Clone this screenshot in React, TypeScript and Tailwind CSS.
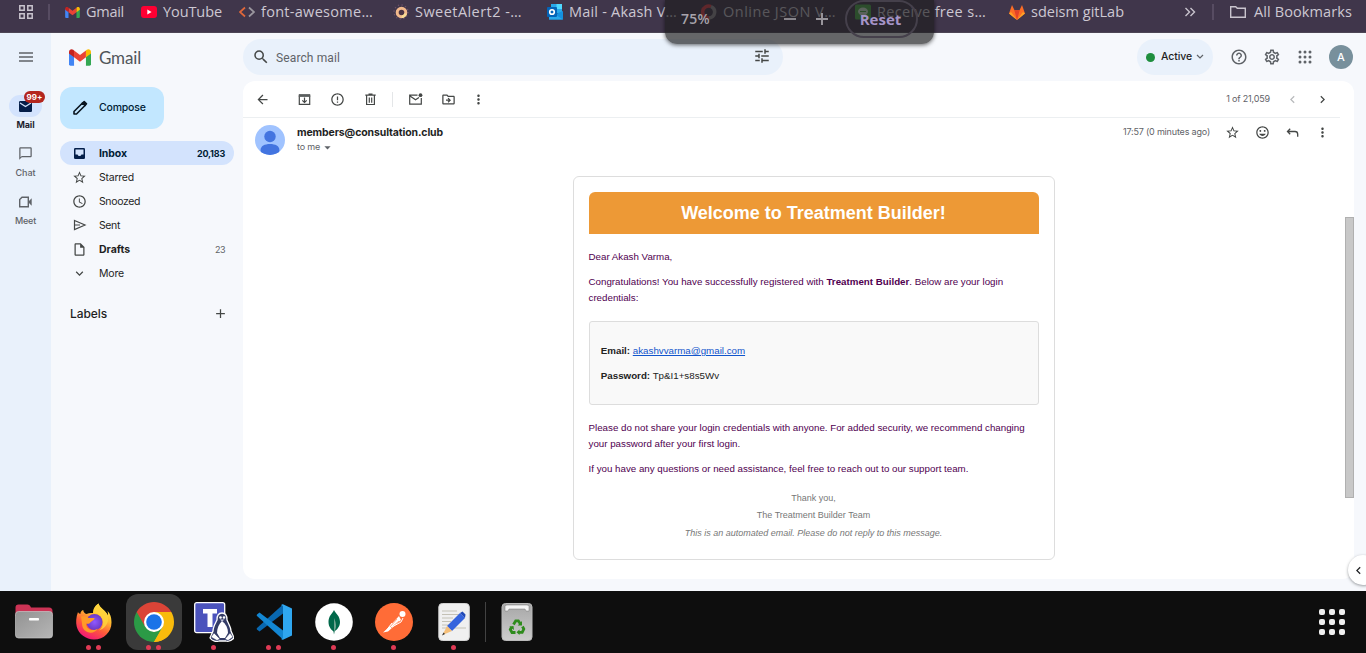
import React from "react";
import {
  MdStarOutline, MdSchedule, MdExpandMore, MdArrowBack, MdErrorOutline, MdMoreVert, MdChevronLeft, MdChevronRight,
  MdTune, MdHelpOutline, MdOutlineSettings, MdAdd, MdSearch, MdArrowDropDown, MdOutlineInsertDriveFile,
  MdOutlineDriveFileMove, MdChatBubbleOutline, MdOutlineMood,
} from "react-icons/md";

function T({ c = "", children }: { c?: string; children: React.ReactNode }) {
  return <span className={"whitespace-nowrap " + c}>{children}</span>;
}

function GmailLogo({ className }: { className: string }) {
  return (
    <svg viewBox="0 0 24 18" className={className}>
      <path d="M0 3v13.4A1.6 1.6 0 0 0 1.6 18H5.5V7z" fill="#4285f4" />
      <path d="M24 3v13.4a1.6 1.6 0 0 1-1.6 1.6H18.500V7z" fill="#34a853" />
      <path d="M5.500 1.300 12 6.200l6.500-4.900V8.700L12 13.500 5.500 8.700z" fill="#ea4335" />
      <path d="M18.500 1.300l.9-.7C21.300-.8 24 .5 24 2.800V4.600l-5.500 4.100z" fill="#fbbc04" />
      <path d="M5.500 1.300l-.9-.7C2.700-.8 0 .5 0 2.800V4.600l5.500 4.100z" fill="#c5221f" />
    </svg>
  );
}

const BM = "font-['Open_Sans',sans-serif] text-[14.5px] leading-6 text-[#cdc8d2] ";

function Bookmark({ icon, track, box, children }: { icon: React.ReactNode; track: string; box: string; children: string }) {
  return (
    <div className={"flex h-6 shrink-0 items-center gap-1.5 " + box}>
      {icon}
      <T c={BM + track}>{children}</T>
    </div>
  );
}

function BookmarkBar() {
  return (
    <div className="flex h-[33px] items-start border-b border-[#4d4655] bg-[#40364b]">
      <div className="flex h-6 w-[65px] shrink-0 items-center">
        <svg viewBox="0 0 14 14" className="ml-[19px] size-3.5" fill="none" stroke="#c9c4ce" strokeWidth="1.500">
          <path d="M.8.8h4.400v4.400H.8zM8.800.8h4.400v4.400H8.800zM.8 8.800h4.400v4.400H.8zM8.800 8.800h4.400v4.400H8.800z" />
        </svg>
        <div className="ml-[15px] h-4 w-[2px] bg-[#574c62]" />
      </div>
      <Bookmark icon={<GmailLogo className="w-[15px] h-[11px] shrink-0" />} track="tracking-[-0.27px]" box="w-[76px]">Gmail</Bookmark>
      <Bookmark track="tracking-[-0.09px]" box="w-[98px]" icon={
        <svg viewBox="0 0 16 12" className="w-4 h-3 shrink-0"><rect width="16" height="12" rx="3" fill="#ff0033" /><path d="M6.300 3.500v5l4.300-2.500z" fill="#fff" /></svg>
      }>YouTube</Bookmark>
      <Bookmark track="tracking-[0.29px]" box="w-[154px]" icon={
        <svg viewBox="0 0 16 12" className="w-4 h-3 shrink-0" fill="none" strokeWidth="1.700"><path d="M6 1.500 1 6l5 4.500" stroke="#e0673a" /><path d="M10 1.500 15 6l-5 4.500" stroke="#9a969e" /></svg>
      }>font-awesome…</Bookmark>
      <Bookmark track="tracking-[0.45px]" box="w-[154px]" icon={
        <svg viewBox="0 0 16 16" className="size-4 shrink-0"><circle cx="8" cy="8" r="7" fill="none" stroke="#6b5169" strokeWidth="1.300" strokeDasharray="1.300 2.400" /><circle cx="8.500" cy="8.500" r="4.300" fill="#4b3443" stroke="#f2b98c" strokeWidth="3" /><path d="M12.600 9.500a4.300 4.300 0 0 1-4 3.300" fill="none" stroke="#f8dc94" strokeWidth="2.500" /></svg>
      }>SweetAlert2 -…</Bookmark>
      <Bookmark track="tracking-[0.2px]" box="w-[154px]" icon={
        <svg viewBox="0 0 16 16" className="size-4 shrink-0"><path d="M4 0h11v9H4z" fill="#28a8ea" /><path d="M9.500 0H15v5H9.500z" fill="#50d9ff" /><path d="M2 12h4l5-3 5-2v8.500H2z" fill="#1490df" /><path d="M9 11l7 4.500H2V12z" fill="#28a8ea" /><rect y="3" width="10" height="10" rx="1" fill="#0364b8" /><circle cx="5" cy="8" r="2.300" fill="none" stroke="#fff" strokeWidth="1.600" /></svg>
      }>Mail - Akash V…</Bookmark>
      <Bookmark track="tracking-[0.5px]" box="w-[154px]" icon={
        <svg viewBox="0 0 16 16" className="size-4 shrink-0" fill="none" strokeWidth="3.500"><path d="M8 14a6 6 0 1 1 2-11.500" stroke="#e33b44" /><path d="M10 2.500A6 6 0 0 1 8 14" stroke="#918c91" /></svg>
      }>Online JSON V…</Bookmark>
      <Bookmark track="tracking-[0.33px]" box="w-[154px]" icon={
        <svg viewBox="0 0 16 16" className="size-4 shrink-0"><rect width="16" height="15" y=".5" rx="1.500" fill="#4aac48" /><ellipse cx="8" cy="7.500" rx="5" ry="4" fill="#d4ead3" /><path d="M5 7.500h6" stroke="#4aac48" /></svg>
      }>Receive free s…</Bookmark>
      <Bookmark track="tracking-[0.01px]" box="w-[175px]" icon={
        <svg viewBox="0 0 16 15" className="w-4 h-[15px] shrink-0"><path d="M8 15 0 8.500 3 0l2.500 5.300h5L13 0l3 8.500z" fill="#fc6d26" /><path d="M8 15 5.300 5.300h5.400z" fill="#e24329" /><path d="M0 8.500 2 7l6 8zM16 8.500 14 7l-6 8z" fill="#fca326" /></svg>
      }>sdeism gitLab</Bookmark>
      <div className="flex h-6 w-[46px] shrink-0 items-center">
        <svg viewBox="0 0 12 10" className="w-3 h-2.5" fill="none" stroke="#c9c4ce" strokeWidth="1.400"><path d="M1.500 1l4 4-4 4M6.500 1l4 4-4 4" /></svg>
        <div className="ml-4 h-4 w-[2px] bg-[#574c62]" />
      </div>
      <div className="flex h-6 items-center gap-2">
        <svg viewBox="0 0 16 12" className="w-4 h-3 shrink-0" fill="none" stroke="#c9c4ce" strokeWidth="1.400"><path d="M.7 11.300V.7h5l1.600 1.600h8v9z" /></svg>
        <T c={BM + "tracking-[0.11px]"}>All Bookmarks</T>
      </div>
    </div>
  );
}

function ZoomBubble() {
  return (
    <div className="absolute left-[665px] top-0 z-10 flex h-11 w-[269px] items-start rounded-b-xl bg-[#1e1e20]/67 shadow-[0_1px_4px_rgba(0,0,0,0.6)]">
      <div className="flex h-[38px] w-full items-center">
        <T c="ml-4 w-[72px] font-['Open_Sans',sans-serif] text-sm font-semibold tracking-[0.3px] text-[#a7a3ab]">75%</T>
        <div className="ml-[31px] h-[2px] w-3 bg-[#88858b]" />
        <svg viewBox="0 0 12 12" className="ml-5 size-3" stroke="#98959b" strokeWidth="2"><path d="M6 0v12M0 6h12" /></svg>
        <div className="ml-[17px] flex h-[38px] w-[73px] items-center justify-center rounded-full border-2 border-[#45404b]">
          <T c="-ml-0.5 font-['Open_Sans',sans-serif] text-[15px] font-bold text-[#a594c8]">Reset</T>
        </div>
      </div>
    </div>
  );
}

const RAIL_TEXT = "h-3.5 font-['Inter',sans-serif] text-[9px] leading-[14px] ";

function Rail() {
  return (
    <div className="flex w-[51px] shrink-0 flex-col items-center bg-[#e9f1fb]">
      <div className="flex h-12 items-center">
        <svg viewBox="0 0 14 10" className="h-2.5 w-3.5" stroke="#5f6368" strokeWidth="1.300"><path d="M0 1h14M0 5h14M0 9h14" /></svg>
      </div>
      <div className="relative mt-3.5 flex h-[22px] w-[33px] items-center justify-center rounded-full bg-[#d3e3fd]">
        <svg viewBox="0 0 13 11" className="h-[11px] w-[13px]"><rect width="13" height="11" rx="1.200" fill="#041e49" /><path d="M1 2l5.500 3.500L12 2" stroke="#d3e3fd" strokeWidth="1.200" fill="none" /></svg>
        <span className="absolute -top-1 left-[15px] flex h-3 w-[21px] items-center justify-center rounded-full bg-[#b3261e] font-['Inter',sans-serif] text-[8px] font-bold text-white">99+</span>
      </div>
      <T c={RAIL_TEXT + "mt-px font-bold tracking-[-0.13px] text-[#1f1f2f]"}>Mail</T>
      <MdChatBubbleOutline className="mt-[14px] size-[15px] text-[#5f6368]" />
      <T c={RAIL_TEXT + "mt-[5px] font-medium tracking-[-0.05px] text-[#5f6368]"}>Chat</T>
      <svg viewBox="0 0 15 12" className="mt-4 h-3 w-[15px]" fill="none" stroke="#5f6368" strokeWidth="1.400"><path d="M4 1.200h6.300v9.600H1.700V3.500z" /><path d="M11 6l2-2v4z" fill="#5f6368" /></svg>
      <T c={RAIL_TEXT + "mt-[6px] font-medium tracking-[-0.21px] text-[#5f6368]"}>Meet</T>
    </div>
  );
}

function NavRow({ icon, label, track, bold, count, countTrack = "", active }: { icon: React.ReactNode; label: string; track: string; bold?: boolean; count?: string; countTrack?: string; active?: boolean }) {
  return (
    <div className={"flex h-6 w-[174px] items-center rounded-full pl-3 pr-[9px] " + (active ? "bg-[#d3e3fd] text-[#001d35]" : "text-[#1f1f1f]")}>
      <span className="flex w-[15px] justify-center">{icon}</span>
      <T c={"ml-3 flex-none pt-0.5 font-['Inter',sans-serif] text-[10.5px] leading-4 " + track + (bold ? " font-bold" : "")}>{label}</T>
      {count && <T c={"ml-auto pt-px font-['Inter',sans-serif] text-[9px] leading-4 " + countTrack + (bold && active ? " font-bold" : " text-[#5f6368]")}>{count}</T>}
    </div>
  );
}

function Sidebar() {
  return (
    <div className="flex w-48 shrink-0 flex-col pl-[9px]">
      <div className="flex h-12 items-center gap-2 pl-[9px]">
        <GmailLogo className="h-[17px] w-[22px]" />
        <T c="pt-px font-['Lato',sans-serif] text-[17px] tracking-[-0.16px] text-[#50555a]">Gmail</T>
      </div>
      <div className="mt-1.5 flex h-[42px] w-[104px] items-center rounded-xl bg-[#c2e7ff] pl-3">
        <svg viewBox="0 0 16 16" className="size-4" fill="none" stroke="#0b1620" strokeWidth="1.600" strokeLinejoin="round"><path d="M2 14v-2.500l8.500-8.500 2.500 2.500L4.500 14z" /><path d="M10.500 3l1.700-1.500 2.300 2.300L13 5.500z" fill="#0b1620" /></svg>
        <T c="ml-[11px] font-['Inter',sans-serif] text-[10.5px] font-medium tracking-[-0.2px] text-[#001d35]">Compose</T>
      </div>
      <div className="mt-3 flex flex-col">
        <NavRow active bold track="tracking-[-0.09px]" label="Inbox" count="20,183" countTrack="tracking-[-0.2px]" icon={
          <svg viewBox="0 0 11 11" className="size-[11px]"><rect width="11" height="11" rx="1.300" fill="#041e49" /><path d="M1.500 1.500h8v5h-2q-.5 1.500-2 1.500t-2-1.500h-2z" fill="#d3e3fd" /></svg>
        } />
        <NavRow icon={<MdStarOutline className="size-[15px] text-[#444746]" />} label="Starred" track="tracking-[-0.23px]" />
        <NavRow icon={<MdSchedule className="size-[15px] text-[#444746]" />} label="Snoozed" track="tracking-[-0.37px]" />
        <NavRow icon={<svg viewBox="0 0 14 12" className="h-3 w-3.5" fill="none" stroke="#444746" strokeWidth="1.200"><path d="M1.500 1.500 12 6 1.500 10.500zM1.500 6H7" /></svg>} label="Sent" track="tracking-[-0.38px]" />
        <NavRow bold icon={<MdOutlineInsertDriveFile className="size-[15px] text-[#444746]" />} label="Drafts" track="tracking-[-0.04px]" count="23" countTrack="tracking-[-0.5px]" />
        <NavRow icon={<MdExpandMore className="size-[15px] text-[#444746]" />} label="More" track="tracking-[-0.17px]" />
      </div>
      <div className="mt-3 flex h-8 items-center pl-2.5 pt-px">
        <T c="font-['Inter',sans-serif] text-xs font-medium tracking-[-0.09px] text-[#1f1f1f]">Labels</T>
        <MdAdd className="ml-auto mr-[15px] size-[15px] text-[#444746]" />
      </div>
    </div>
  );
}

function Header() {
  return (
    <div className="flex h-12 items-center">
      <div className="flex h-9 w-[540px] items-center rounded-full bg-[#e9f1fb] pl-[9px]">
        <MdSearch className="size-[18px] text-[#444746]" />
        <T c="ml-1.5 pt-px font-['Roboto',sans-serif] text-xs tracking-[0.12px] text-[#5f6368]">Search mail</T>
        <MdTune className="mb-0.5 ml-auto mr-3 size-[18px] text-[#444746]" />
      </div>
      <div className="ml-[354px] flex h-9 w-[76px] items-center rounded-full bg-[#e9f1fb] pl-[9px]">
        <span className="size-[9px] rounded-full bg-[#1e8e3e]" />
        <T c="ml-1.5 font-['Inter',sans-serif] text-[10.5px] font-medium tracking-[-0.11px] text-[#1f1f1f]">Active</T>
        <svg viewBox="0 0 8 6" className="ml-1 h-1.5 w-2" fill="none" stroke="#5f6368" strokeWidth="1.200"><path d="M1 1l3 3 3-3" /></svg>
      </div>
      <MdHelpOutline className="ml-[17px] size-[18px] text-[#5f6368]" />
      <MdOutlineSettings className="ml-[15px] size-[18px] text-[#5f6368]" />
      <svg viewBox="0 0 18 18" className="ml-[15px] size-[18px]" fill="#5f6368">
        {[4, 9, 14].map((y) => [4, 9, 14].map((x) => <circle key={x + "-" + y} cx={x} cy={y} r="1.500" />))}
      </svg>
      <span className="ml-[15px] flex size-6 items-center justify-center rounded-full bg-[#78909c] pt-px font-['Inter',sans-serif] text-[11px] font-medium text-white">A</span>
    </div>
  );
}

const IC = "size-[15px] shrink-0 text-[#444746]";

function Toolbar() {
  return (
    <div className="flex h-[37px] w-[1097px] shrink-0 items-center border-b border-[#eceff1] pl-3">
      <MdArrowBack className={IC} />
      <svg viewBox="0 0 15 15" className="ml-[27px] size-[15px]" fill="none" stroke="#444746" strokeWidth="1.200"><path d="M2.300 4v8.400h10.400V4M2.300 12.400" /><path d="M2 2.500h11v2H2z" fill="#5b5e5e" stroke="#5b5e5e" strokeWidth=".8" /><path d="M7.500 5.500v5M5.300 8.300l2.200 2.200 2.200-2.200" /></svg>
      <MdErrorOutline className={IC + " ml-[18px]"} />
      <svg viewBox="0 0 15 15" className="ml-[18px] size-[15px]" fill="none" stroke="#444746" strokeWidth="1.200"><path d="M3.600 3.500v9h7.800v-9M2.300 3.200h10.400M5.500 2.200h4M6.300 5.500v5.200M8.700 5.500v5.200" /></svg>
      <div className="ml-[14px] h-[15px] w-px bg-[#e4e6e8]" />
      <svg viewBox="0 0 15 15" className="ml-[15px] size-[15px]" fill="none" stroke="#444746" strokeWidth="1.200"><path d="M9.500 3.200H1.700v9h11.600V6M2 4l5.500 3.800L11 5.500" /><circle cx="12.500" cy="3.200" r="1.900" fill="#444746" stroke="none" /></svg>
      <MdOutlineDriveFileMove className={IC + " ml-[18px]"} />
      <MdMoreVert className={IC + " ml-[15px]"} />
      <T c="ml-auto font-['Inter',sans-serif] text-[9px] tracking-[-0.17px] text-[#5f6368]">1 of 21,059</T>
      <MdChevronLeft className="ml-[15px] size-[15px] text-[#b8babc]" />
      <MdChevronRight className={IC + " ml-[15px] mr-[10px]"} />
    </div>
  );
}

const P = "-ml-[0.5px] text-[9.750px] leading-[16px] text-[#500050]";

function MailCard() {
  return (
    <div className="ml-[330px] mt-5 h-[384px] w-[482px] rounded-md border border-[#dddddd] px-[15px] pt-[15px] font-['Liberation_Sans',sans-serif]">
      <div className="flex h-[42px] items-center justify-center rounded-t-md bg-[#ed9936] pr-px text-lg font-bold text-white"><T>Welcome to Treatment Builder!</T></div>
      <p className={P + " mt-[15px]"}>Dear Akash Varma,</p>
      <p className={P + " mt-[9px]"}><T>Congratulations! You have successfully registered with <b>Treatment Builder</b>. Below are your login</T><br />credentials:</p>
      <div className="mt-[15px] flex h-[84px] flex-col gap-[9px] rounded-[3px] border border-[#dddddd] bg-[#f9f9f9] pl-[10.800px] pt-[21px] text-[9.750px] leading-4 text-[#222222]">
        <p><b>Email:</b> <T c="text-[#1155cc] underline">akashvvarma@gmail.com</T></p>
        <p><b>Password:</b> Tp&amp;I1+s8s5Wv</p>
      </div>
      <p className={P + " mt-[15px]"}><T>Please do not share your login credentials with anyone. For added security, we recommend changing</T><br />your password after your first login.</p>
      <p className={P + " mt-[9px]"}>If you have any questions or need assistance, feel free to reach out to our support team.</p>
      <div className="mt-[12.500px] pr-px text-center text-[9px] leading-[17.500px] text-[#777777]">
        <p>Thank you,</p>
        <p>The Treatment Builder Team</p>
        <p className="italic">This is an automated email. Please do not reply to this message.</p>
      </div>
    </div>
  );
}

function Message() {
  return (
    <div className="relative flex h-[498px] w-[1111px] flex-col overflow-hidden rounded-xl bg-white">
      <Toolbar />
      <div className="flex h-[38px] w-[1097px] shrink-0 pl-3 pt-[7px]">
        <svg viewBox="0 0 30 30" className="size-[30px]"><clipPath id="av"><circle cx="15" cy="15" r="15" /></clipPath><g clipPath="url(#av)"><rect width="30" height="30" fill="#a0c3ff" /><circle cx="15" cy="11.500" r="5.700" fill="#4374e0" /><path d="M5.600 30v-5c0-4 4-6 9.400-6s9.400 2 9.400 6v5z" fill="#4374e0" /></g></svg>
        <div className="ml-3 flex flex-col">
          <T c="h-[15px] font-['Inter',sans-serif] text-[10.5px] font-bold leading-[15px] tracking-[-0.12px] text-[#1f1f1f]">members@consultation.club</T>
          <div className="-mt-px flex h-[15px] items-center font-['Inter',sans-serif] text-[9px] tracking-[-0.18px] text-[#5f6368]"><T>to me</T><MdArrowDropDown className="mt-0.5 size-[15px]" /></div>
        </div>
        <div className="ml-auto flex h-[15px] items-center pr-[10px]">
          <T c="pb-px font-['Inter',sans-serif] text-[9px] tracking-[-0.18px] text-[#5f6368]">17:57 (0 minutes ago)</T>
          <MdStarOutline className={IC + " ml-[15px]"} />
          <MdOutlineMood className={IC + " ml-[15px]"} />
          <svg viewBox="0 0 15 15" className="ml-[15px] size-[15px]" fill="none" stroke="#444746" strokeWidth="1.300"><path d="M5.200 3.800 2.500 6.500l2.700 2.700M2.500 6.500h7.500q2.700 0 2.700 2.700v2.600" /></svg>
          <MdMoreVert className={IC + " ml-[15px]"} />
        </div>
      </div>
      <MailCard />
      <div className="absolute right-0 top-[136px] h-[281px] w-[9px] border border-[#b0b0b0] bg-[#c8c8c8]" />
    </div>
  );
}

function Slot({ dots, active, children }: { dots: number; active?: boolean; children: React.ReactNode }) {
  return (
    <div className={"relative mx-[2px] flex size-14 shrink-0 items-center justify-center rounded-xl " + (active ? "bg-[#3a3a3a]" : "")}>
      {children}
      <div className="absolute inset-x-0 bottom-0 flex justify-center gap-[5px] pr-px">
        {Array.from({ length: dots }, (_, i) => <span key={i} className="size-[5px] rounded-full bg-[#e03a55]" />)}
      </div>
    </div>
  );
}

function Dock() {
  return (
    <div className="flex h-[62px] items-start bg-[#0e0e0e] pl-1 pt-[3px]">
      <Slot dots={0}>
        <svg viewBox="0 0 40 40" className="size-10"><defs><linearGradient id="fg" x2="1" y2="1"><stop stopColor="#929292" /><stop offset="1" stopColor="#b6b6b6" /></linearGradient></defs><path d="M1.500 10V5.500q0-3 3-3h9q2 0 3 2l.5 1h18q3.500 0 3.500 3.500v5H1.500z" fill="#cc3355" /><rect x="1.500" y="9.500" width="37" height="26.500" rx="3" fill="url(#fg)" stroke="#c6c6c6" strokeWidth=".7" /><rect x="15" y="16" width="10" height="2.500" rx=".7" fill="#fff" /></svg>
      </Slot>
      <Slot dots={2}>
        <svg viewBox="0 0 40 40" className="size-10"><defs><linearGradient id="ff" x1=".8" x2=".3" y1="0" y2="1"><stop stopColor="#fff44f" /><stop offset=".35" stopColor="#ffbd2f" /><stop offset=".65" stopColor="#ff5b3a" /><stop offset="1" stopColor="#f2127b" /></linearGradient><radialGradient id="fp"><stop stopColor="#9059ff" /><stop offset="1" stopColor="#6b39c5" /></radialGradient></defs>
          <path d="M24.500 1.500c-4 2.500-5.500 6-5.500 9.500-2.500-.3-4.500 0-6.500 1-2-.5-3-2-3.300-4C7.500 8.500 6.500 10 6.300 12 5 11.500 4.500 11 4 10c-2 5-2.200 10.500-1.300 14.500C4.500 32 12 37.500 20 37.500c10 0 17.500-7.500 17.500-17 0-6-1.500-9-4-11.500.5 2 .7 3 .5 4.500C31.500 8 26 6.500 24.500 1.500z" fill="url(#ff)" /><circle cx="20.500" cy="20" r="8" fill="url(#fp)" /><path d="M7 14.500c3-.5 6 0 7.500 1.500h6c.5 2-3.500 3-4.500 5-1.500 1-3 1-4 .5 0 6 7 8.500 12 5-4 7-16 5-16-5z" fill="#ff9b28" /><path d="M24.500 1.500c-4 3-5.500 6-4.500 9.500 6 1 10 5 9 11-.5 3-2 5-4 6.500 6-2 10-7 9-14.500C31.500 8 26 6.500 24.500 1.500z" fill="#ffd23c" opacity=".85" /></svg>
      </Slot>
      <Slot dots={2} active>
        <svg viewBox="0 0 40 40" className="size-10"><path d="M20 20 2.680 10A20 20 0 0 1 37.320 10z" fill="#db4437" /><path d="M20 20 37.320 10A20 20 0 0 1 20 40z" fill="#f9bb0c" /><path d="M20 20v20A20 20 0 0 1 2.680 10z" fill="#2b9a46" /><path d="M20 10h17.320L28.660 25z" fill="#f9bb0c" /><path d="M28.660 25 20 40l-2-14z" fill="#f9bb0c" /><path d="M2.680 10 11.340 25 12 15 20 10z" fill="#db4437" /><path d="M11.340 25 20 30l8.660-5L20 40z" fill="#2b9a46" /><path d="M28.660 25 20 40q9 0 14-7l-3-14z" fill="#f9bb0c" /><circle cx="20" cy="20" r="10" fill="#fff" /><circle cx="20" cy="20" r="7.800" fill="#1a73e8" /></svg>
      </Slot>
      <Slot dots={1}>
        <svg viewBox="0 0 40 40" className="size-10"><rect x=".7" y=".7" width="30" height="30" rx="2" fill="#4b53bc" stroke="#fff" strokeWidth="1.300" /><path d="M9 7h14v4.500h-4.500V25h-5V11.500H9z" fill="#fff" /><path d="M28 11c-4 0-5 3-5 7-2 4-4 7-4 11l-3 7c2 3 7 4 9 3h7c3 1 6-1 8-3l-3-7c0-4-3-8-4-11 0-4-1-7-5-7z" fill="#343c66" stroke="#fff" strokeWidth="1.300" /><path d="M28 19c-3 3-5 7-5 12l3 5h5l3-5c0-5-2-9-6-12z" fill="#fff" /><path d="M17 35l3-4 6 6-3 1.500zM39 35l-3-4-5 6 3 1.500z" fill="#fff" stroke="#343c66" strokeWidth=".5" /><circle cx="26.500" cy="15.500" r="1.300" fill="#fff" /><circle cx="30" cy="15.500" r="1.300" fill="#fff" /><path d="M26 17.500h4.500L28 19.500z" fill="#c9cce0" /></svg>
      </Slot>
      <Slot dots={2}>
        <svg viewBox="0 0 36 36" className="size-9"><path d="M27 .5 1 24q-.7.700 0 1.500L3.500 27.500 27 9.500z" fill="#0968b0" /><path d="M27 35.500 1 12q-.7-.7 0-1.500L3.500 8.500 27 26.500z" fill="#1387d3" /><path d="M27 .3l9 4.200v27l-9 4.200q-1.500 0-2-1.200 2 .5 2-1V2.500q0-1.500-2-1 .5-1.200 2-1.200z" fill="#2fa7f0" /></svg>
      </Slot>
      <Slot dots={1}>
        <svg viewBox="0 0 38 38" className="size-[38px]"><circle cx="19" cy="19" r="18.800" fill="#fff" /><path d="M19 7c-2 4-5.500 6-5.500 12 0 5 3 8 5 9.500l.5 3 .5-3c2-1.500 5.500-4.500 5.500-9.500 0-6-4-8-6-12z" fill="#00684a" /><path d="M19 15v16l.5-3c1.500-2 2-5 1-9z" fill="#6da38f" /></svg>
      </Slot>
      <Slot dots={1}>
        <svg viewBox="0 0 38 38" className="size-[38px]"><circle cx="19" cy="19" r="19" fill="#ff6c37" /><circle cx="27.500" cy="11" r="3" fill="#fff" /><path d="M24 13 12 26l-4 3.500 5-1L26 17z" fill="#fff" /><path d="M22 16l-7 8M24 18l-8 7" stroke="#ff6c37" strokeWidth=".6" /><path d="M17 20l-7 9M28 15l-2 4-9 5" stroke="#fff" fill="none" /></svg>
      </Slot>
      <Slot dots={1}>
        <svg viewBox="0 0 32 38" className="h-[38px] w-8"><rect x=".8" y=".5" width="30.500" height="37" rx="3.500" fill="#f0f0f0" stroke="#d3d3d3" /><path d="M4 8h15M4 11.500h17M4 15h11M4 18.500h9M4 22h9M4 25h24" stroke="#c4c1b5" strokeWidth="1.200" /><path d="M22 10l5 5L14 28l-5-5z" fill="#3564dd" /><path d="M22 10l2.500-1.500 3 3L27 15z" fill="#224ab7" /><path d="M9 23l5 5-9.500 4z" fill="#f5bf79" /><path d="M5.500 29.500 4 32.500 7 31z" fill="#333" /></svg>
      </Slot>
      <div className="mx-px mt-[8px] h-10 w-px bg-[#424242]" />
      <Slot dots={0}>
        <svg viewBox="0 0 32 38" className="h-[38px] w-8"><defs><linearGradient id="tr" x2="0" y2="1"><stop stopColor="#a6a6a6" /><stop offset="1" stopColor="#cdcdcd" /></linearGradient></defs><rect x="1" y=".5" width="30" height="37" rx="3.500" fill="url(#tr)" stroke="#bababa" /><path d="M4 8V3.500q0-1.500 2-1.500h20q2 0 2 1.500V8H25l-1-2H8L7 8z" fill="#f5f5f5" stroke="#777" strokeWidth=".5" /><g fill="none" stroke="#2e8b1c" strokeWidth="2.800"><path d="M12.500 21.500l2.200-3.700h2.600l2 3" /><path d="M21.500 23.500l1.300 2.500-1.600 3.300H18" /><path d="M14.500 29.500H11L9.300 26.500l1.200-2.300" /></g><path d="M21 18v4.500h-4.300zM18.500 26.500v5.500l-3-2.700zM8.300 23.500l4.200-.5.500 4z" fill="#2e8b1c" /></svg>
      </Slot>
      <div className="ml-auto mr-[21px] mt-[15px] grid grid-cols-3 gap-1">
        {Array.from({ length: 9 }, (_, i) => <span key={i} className="size-1.5 rounded-[2px] bg-[#f0f0f0]" />)}
      </div>
    </div>
  );
}

export default function App() {
  return (
    <div className="relative flex h-[653px] w-[1366px] flex-col overflow-hidden bg-[#f6f8fc]">
      <BookmarkBar />
      <div className="flex h-[558px]">
        <Rail />
        <Sidebar />
        <div className="flex flex-col">
          <Header />
          <Message />
        </div>
      </div>
      <Dock />
      <ZoomBubble />
      <div className="absolute left-[1348px] top-[555px] flex size-[30px] items-center rounded-full bg-white pl-[3px] shadow-[0_1px_3px_rgba(60,64,67,0.5)]"><MdChevronLeft className="size-[15px] text-[#202124]" /></div>
    </div>
  );
}
